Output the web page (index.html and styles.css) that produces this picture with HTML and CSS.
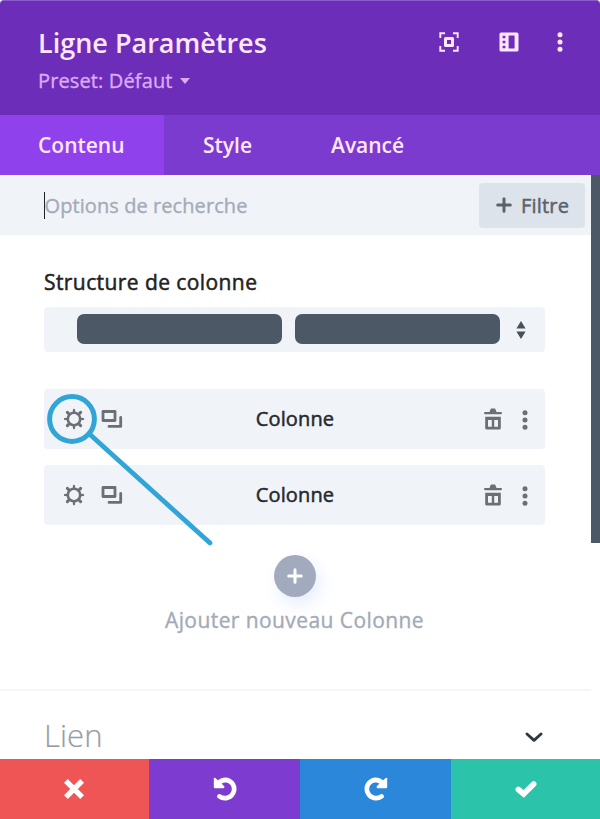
FILE: index.html
```html
<!DOCTYPE html>
<html lang="fr">
<head>
<meta charset="utf-8">
<title>Ligne Paramètres</title>
<link rel="stylesheet" href="styles.css">
</head>
<body>
<svg class="defs" width="0" height="0" aria-hidden="true">
  <symbol id="gear" viewBox="0 0 22 22">
    <circle cx="11" cy="11" r="6.200" fill="none" stroke="currentColor" stroke-width="2.600"/>
    <path d="M9.700 4.500L10 1.300Q11 .3 12 1.300L12.300 4.500ZM9.700 17.500L10 20.700Q11 21.700 12 20.700L12.300 17.500ZM4.500 9.700L1.300 10Q.3 11 1.300 12L4.500 12.300ZM17.500 9.700L20.700 10Q21.700 11 20.700 12L17.500 12.300Z" fill="currentColor"/>
    <path d="M6 6L4.400 4.400M16 16L17.600 17.600M6 16L4.400 17.600M16 6L17.600 4.400" fill="none" stroke="currentColor" stroke-width="3.100" stroke-linecap="round"/>
  </symbol>
  <symbol id="copy" viewBox="0 0 22 20">
    <path d="M2 2.500H14V11.500H2Z" fill="none" stroke="currentColor" stroke-width="2.800" stroke-linejoin="round"/>
    <path d="M19.700 8.500V17.400H8" fill="none" stroke="currentColor" stroke-width="2.800" stroke-linecap="round" stroke-linejoin="round"/>
  </symbol>
  <symbol id="trash" viewBox="0 0 18 22">
    <path d="M1 4H5.500L6.500 1.200Q6.700 .6 7.300 .6H10.700Q11.300 .6 11.500 1.200L12.500 4H17Q18 4 18 5.100T17 6.200H1Q0 6.200 0 5.100T1 4Z" fill="currentColor"/>
    <path fill-rule="evenodd" d="M1.200 8.800H16.800V20Q16.800 21.500 15.300 21.500H2.700Q1.200 21.500 1.200 20ZM4 12V18.700H7.800V12ZM10.200 12V18.700H14V12Z" fill="currentColor"/>
  </symbol>
  <symbol id="dots" viewBox="0 0 6 20">
    <circle cx="3" cy="2.700" r="2.500" fill="currentColor"/><circle cx="3" cy="10" r="2.500" fill="currentColor"/><circle cx="3" cy="17.300" r="2.500" fill="currentColor"/>
  </symbol>
  <symbol id="plus" viewBox="0 0 16 16">
    <path d="M8 1.700V14.300M1.700 8H14.300" stroke="currentColor" stroke-width="3" stroke-linecap="round"/>
  </symbol>
  <symbol id="turn" viewBox="0 0 24 24">
    <path d="M5.500 6.200C8 3.300 10.700 2.800 12.800 2.800A9.200 9.200 0 1 1 6.500 19.400" fill="none" stroke="currentColor" stroke-width="4.700" stroke-linecap="round"/>
    <path d="M.8 1.500Q1 .3 2.300 1L4.300 2.800L9.500 7.500L11.300 9.600Q11.800 11.200 10.300 11.200H2Q.8 11.200 .8 10Z" fill="currentColor"/>
  </symbol>
</svg>

<div class="panel">
  <header class="header">
    <div>
      <h1 class="title">Ligne Paramètres</h1>
      <div class="preset"><span>Preset: Défaut</span><i class="caret"></i></div>
    </div>
    <div class="tools">
      <svg width="20" height="20" viewBox="0 0 20 20" fill="none" stroke="currentColor">
        <path d="M1.300 6V1.300H6M14 1.300H18.700V6M18.700 14V18.700H14M6 18.700H1.300V14" stroke-width="1.900"/>
        <rect x="6.500" y="6.500" width="7" height="7" stroke-width="3" stroke-linejoin="round"/>
      </svg>
      <svg width="20" height="20" viewBox="0 0 20 20">
        <path fill="currentColor" fill-rule="evenodd" d="M2 .5H18Q19.500 .5 19.500 2V18Q19.500 19.500 18 19.500H2Q.5 19.500 .5 18V2Q.5 .5 2 .5ZM3.600 3.800V6.300H6.400V3.800ZM3.600 8.700V11.300H6.400V8.700ZM3.600 13.700V16.200H6.400V13.700ZM9.600 3.500V16.500H15.600V3.500Z"/>
      </svg>
      <svg class="menu" width="6" height="20"><use href="#dots"/></svg>
    </div>
  </header>

  <nav class="tabs">
    <a class="tab active">Contenu</a>
    <a class="tab style-tab">Style</a>
    <a class="tab advanced-tab">Avancé</a>
  </nav>

  <div class="body">
    <main class="content">
      <div class="search">
        <div class="field">Options de recherche</div>
        <button class="filter"><svg width="16" height="16"><use href="#plus"/></svg><span>Filtre</span></button>
      </div>

      <section class="structure">
        <h2 class="label">Structure de colonne</h2>
        <div class="select">
          <span class="block"></span>
          <span class="block"></span>
          <svg class="sort" width="10" height="18" viewBox="0 0 10 18"><path fill="currentColor" d="M5 0L9.600 7.400H.4ZM5 18L.4 10.600H9.600Z"/></svg>
        </div>

        <div class="rows">
          <div class="row">
            <svg class="gear" width="22" height="22"><use href="#gear"/></svg>
            <svg width="22" height="20"><use href="#copy"/></svg>
            <span class="name">Colonne</span>
            <svg width="18" height="22"><use href="#trash"/></svg>
            <svg class="more" width="6" height="20"><use href="#dots"/></svg>
            <svg class="callout" width="170" height="160" viewBox="0 0 170 160" fill="none" stroke="currentColor" stroke-linecap="round">
              <circle cx="28" cy="30" r="22.400" stroke-width="5"/>
              <path d="M46 45.500L166 154" stroke-width="4.800"/>
            </svg>
          </div>
          <div class="row">
            <svg class="gear" width="22" height="22"><use href="#gear"/></svg>
            <svg width="22" height="20"><use href="#copy"/></svg>
            <span class="name">Colonne</span>
            <svg width="18" height="22"><use href="#trash"/></svg>
            <svg class="more" width="6" height="20"><use href="#dots"/></svg>
          </div>
        </div>

        <div class="add">
          <button class="add-button"><svg width="16" height="16"><use href="#plus"/></svg></button>
          <span class="add-text">Ajouter nouveau Colonne</span>
        </div>
      </section>

      <section class="link">
        <h2 class="link-title">Lien</h2>
        <svg width="18" height="11" viewBox="0 0 18 11"><path d="M2 2L9 8.300L16 2" fill="none" stroke="currentColor" stroke-width="2.900" stroke-linecap="round" stroke-linejoin="round"/></svg>
      </section>
    </main>
    <div class="scroll"></div>
  </div>

  <footer class="footer">
    <button class="action cancel"><svg width="20" height="20" viewBox="0 0 20 20"><path d="M3.800 3.800L16.200 16.200M16.200 3.800L3.800 16.200" stroke="currentColor" stroke-width="5.400" stroke-linecap="square"/></svg></button>
    <button class="action undo"><svg width="24" height="24"><use href="#turn"/></svg></button>
    <button class="action redo"><svg class="mirror" width="24" height="24"><use href="#turn"/></svg></button>
    <button class="action save"><svg width="22" height="18" viewBox="0 0 22 18"><path d="M3.300 9.500L8.700 14L18.700 4" fill="none" stroke="currentColor" stroke-width="5.600" stroke-linecap="round"/></svg></button>
  </footer>
</div>
</body>
</html>
```
FILE: styles.css
```css
* { box-sizing: border-box; }
body { margin: 0; font-family: "Open Sans", sans-serif; background: #fff; }
h1, h2 { margin: 0; }
button { border: 0; padding: 0; font: inherit; color: inherit; }
svg { display: block; flex: none; }
.defs { position: absolute; }
.panel { width: 600px; height: 819px; display: flex; flex-direction: column; overflow: hidden; }

.header { height: 115px; flex: none; background: #6c2eb9; color: #ffe6ff; display: flex; justify-content: space-between; padding: 25px 37px 0 38px; border-top: 1px solid #8d5bcb; border-radius: 4px 4px 0 0; }
.title { font-size: 27px; line-height: 34px; font-weight: 600; }
.preset { display: flex; align-items: center; gap: 7px; margin-top: 7px; font-size: 20px; line-height: 28px; letter-spacing: .13px; -webkit-text-stroke: .35px; color: #dfaaf8; }
.caret { border: 5px solid transparent; border-top: 6px solid currentColor; border-bottom: 0; }
.tools { display: flex; gap: 40px; padding-top: 6px; }
.tools .menu { margin-left: -2px; }

.tabs { height: 60px; flex: none; display: flex; background: #7c3bcf; color: #ffe6ff; }
.tab { font-size: 21px; line-height: 60px; font-weight: 600; white-space: nowrap; }
.active { width: 164px; padding-left: 38px; background: #8f42ec; }
.style-tab { width: 167px; padding-left: 39px; }

.body { flex: 1; min-height: 0; display: flex; }
.content { width: 591px; }
.scroll { width: 9px; height: 368px; background: #4c5866; }
.search { height: 60px; background: #f0f4f9; display: flex; justify-content: space-between; align-items: center; padding: 0 6px 0 44px; }
.field { font-size: 20px; line-height: 27px; letter-spacing: .08px; -webkit-text-stroke: .35px; color: #a5abb6; border-left: 1px solid #222; text-indent: -.5px; }
.filter { width: 106px; height: 45px; border-radius: 4px; background: #dde3eb; color: #5b626d; display: flex; align-items: center; justify-content: center; gap: 9px; padding-left: 1px; font-size: 20px; letter-spacing: .2px; -webkit-text-stroke: .5px; }

.structure { height: 456px; padding: 32px 46px 0 44px; border-bottom: 2px solid #f4f5f6; }
.label { font-size: 21px; line-height: 30px; font-weight: 400; letter-spacing: .42px; -webkit-text-stroke: .5px; color: #222; }
.select { height: 45px; margin-top: 10px; padding: 0 18px 2px 33px; display: flex; align-items: center; gap: 13px; background: #f0f4f9; border-radius: 4px; color: #4a5059; }
.block { width: 205px; height: 30px; border-radius: 7px; background: #4c5866; }
.sort { margin: 2px 0 0 3px; }
.rows { display: grid; gap: 16px; margin-top: 37px; }
.row { position: relative; height: 60px; display: flex; align-items: center; padding: 0 17px 0 19px; background: #f0f4f9; border-radius: 4px; color: #6b7077; }
.gear { margin-right: 16px; }
.name { flex: 1; padding: 0 17px 2px 0; text-align: center; font-size: 20px; letter-spacing: .15px; -webkit-text-stroke: .5px; color: #26292e; }
.more { margin: 2px 0 0 20px; }
.callout { position: absolute; left: 0; top: 0; color: #31a5d6; z-index: 1; }
.add { display: flex; flex-direction: column; align-items: center; padding-top: 30px; color: #a2aabd; }
.add-button { width: 42px; height: 42px; border-radius: 50%; background: #a2aabd; color: #fff; display: grid; place-items: center; box-shadow: 4px 7px 18px #e4ecfd; }
.add-text { margin-top: 9px; font-size: 21px; line-height: 28px; letter-spacing: .42px; -webkit-text-stroke: .35px; color: #a3aab8; white-space: nowrap; }
.link { display: flex; justify-content: space-between; align-items: center; padding: 23px 48px 0 44px; }
.link-title { font-size: 31px; line-height: 42px; font-weight: 300; letter-spacing: .1px; -webkit-text-stroke: .2px; color: #959da7; }
.link svg { margin-top: 4px; color: #303943; }

.footer { height: 60px; flex: none; display: grid; grid-template-columns: 149px 151px 151px 149px; color: #fff; }
.action { display: grid; place-items: center; }
.mirror { transform: scaleX(-1); }
.cancel { background: #ef5555; }
.cancel svg { margin-right: 2px; }
.undo { background: #7d3bd0; }
.redo { background: #2b87da; }
.save { background: #2bc4aa; }
```
